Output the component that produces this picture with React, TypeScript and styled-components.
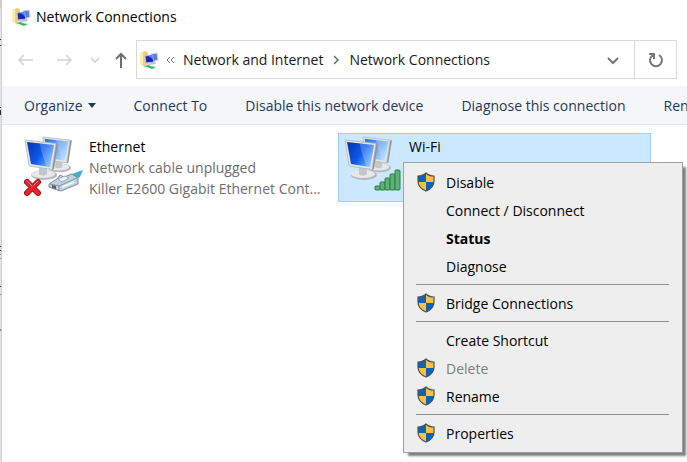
import React, { useId } from "react";
import styled, { createGlobalStyle } from "styled-components";

const Global = createGlobalStyle`
  * { box-sizing: border-box; }
  body { margin: 0; background: #fff; overflow: hidden; }
  body, button { font: 14px/21px "Open Sans", "Noto Sans", sans-serif; color: #191919; }
  button { border: 0; padding: 0; margin: 0; background: none; white-space: nowrap; }
  svg { display: block; flex: none; }
`;

const Screen = styled.div`
  display: flex;
  min-height: 100vh;
  overflow: hidden;
`;

const Backdrop = styled.div`
  width: 2px;
  flex: none;
  overflow: hidden;
  background: #e4e4e4;
  border-right: 1px solid #cfcfcf;
`;

const Window = styled.main`
  flex: 1;
  min-width: 0;
  display: flex;
  flex-direction: column;
`;

const TitleBar = styled.header`
  display: flex;
  align-items: center;
  gap: 5px;
  height: 33px;
  padding-left: 9px;
`;

const Title = styled.h1`
  margin: 0;
  font-size: 14px;
  font-weight: 400;
  color: #000;
`;

const NavRow = styled.nav`
  display: flex;
  align-items: center;
  height: 53px;
  padding: 0 10px 0 13px;
`;

const Arrows = styled.div`
  display: flex;
  align-items: center;
  width: 121px;
  gap: 16px;
`;

const IconButton = styled.button`
  display: flex;
  align-items: center;
  justify-content: center;
`;

const AddressBox = styled.div`
  flex: 1;
  min-width: 0;
  display: flex;
  align-items: stretch;
  height: 39px;
  border: 1px solid #d9d9d9;
`;

const Crumbs = styled.div`
  flex: 1;
  display: flex;
  align-items: center;
  gap: 6px;
  padding-left: 2px;
`;

const AddressButton = styled(IconButton)<{ $divided?: boolean }>`
  width: 42px;
  border-left: ${(p) => (p.$divided ? "1px solid #d9d9d9" : "0")};
`;

const Toolbar = styled.div`
  display: flex;
  align-items: center;
  gap: 38px;
  height: 39px;
  padding-left: 22px;
  overflow: hidden;
  background: #f5f6f8;
  border-bottom: 1px solid #e6e8ec;
`;

const Command = styled.button`
  display: flex;
  align-items: center;
  gap: 5px;
  flex: none;
  color: #1e395b;
`;

const Content = styled.section`
  flex: 1;
  display: flex;
  align-items: flex-start;
  padding: 8px 16px;
`;

const Tile = styled.article<{ $selected?: boolean }>`
  position: relative;
  display: flex;
  flex: 0 0 313px;
  margin-left: ${(p) => (p.$selected ? "7px" : "0")};
  height: 69px;
  padding: 2px 0 0 5px;
  gap: 5px;
  border: 1px solid ${(p) => (p.$selected ? "#99d1ff" : "transparent")};
  background: ${(p) => (p.$selected ? "#cce8ff" : "transparent")};
`;

const Details = styled.div`
  min-width: 0;
`;

const Name = styled.h2`
  margin: 0;
  font-size: 14px;
  font-weight: 400;
  color: #000;
`;

const Detail = styled.p`
  margin: 0;
  color: #6d6d6d;
  white-space: nowrap;
`;

const Menu = styled.div`
  position: absolute;
  left: 64px;
  top: 28px;
  width: 280px;
  padding: 5px 13px 5px 12px;
  background: #eee;
  border: 1px solid #a0a0a0;
  box-shadow: 4px 4px 2px -1px rgba(0, 0, 0, 0.5);
`;

const MenuItem = styled.button<{ $bold?: boolean }>`
  display: grid;
  grid-template-columns: 20px 1fr;
  column-gap: 10px;
  align-items: center;
  width: 100%;
  height: 28px;
  text-align: left;
  font-weight: ${(p) => (p.$bold ? 700 : 400)};
  color: #000;
  &:disabled { color: #7d7d7d; }
`;

const Separator = styled.hr`
  height: 1px;
  margin: 4px 0;
  border: 0;
  background: #919191;
`;

function FolderNetworkIcon() {
  return (
    <svg width="20" height="20" viewBox="0 0 20 20" aria-hidden="true">
      <path d="M1 3l5-2 3 1v12l-4 2-4-2z" fill="#ecd27c" />
      <path d="M1 3l3-1v13l-3-2z" fill="#fbeeb4" />
      <path d="M12 4l6-1 1 7-6 2z" fill="#5f7fdc" stroke="#c8d4e8" />
      <path d="M6 6l7-1 2 7-8 1z" fill="#1726b8" stroke="#a8bce4" />
      <path d="M9 6l4-1 1 4z" fill="#5b7ff0" />
      <path d="M8 14l8-2 1 2-7 1z" fill="#b9c2cc" />
      <path d="M4 16l6-1 1 1 6 1-4 2-5-2z" fill="#35b865" />
    </svg>
  );
}

function Monitor({ x, y, fill, small }: { x: number; y: number; fill: string; small?: boolean }) {
  return (
    <g transform={`translate(${x} ${y}) scale(${small ? 0.88 : 1})`}>
      <ellipse cx="20" cy="35" rx="13" ry="5" fill="#b4b8bb" />
      <ellipse cx="19" cy="34" rx="12" ry="4" fill="#e6e8ea" />
      <path d="M15 27l8 1v6c-2 2-6 2-8 0z" fill="#c3c7ca" />
      <path d="M31 3l3 1-4 25-2 1z" fill="#8f959b" />
      <path d="M1 0l31 3.500-4 26L5 26z" fill="#e3e6e8" stroke="#b0b5b9" strokeWidth=".8" />
      <path d="M3 2l27 3-4 22L7 24z" fill={fill} />
      <path d="M16 3.500l14 1.500-4 22-4-1c-2-8-5-14-6-22.500z" fill="#fff" opacity=".22" />
    </g>
  );
}

function ConnectionIcon({ state }: { state: "unplugged" | "wireless" }) {
  const id = useId();
  return (
    <svg width="60" height="62" viewBox="0 0 60 62" aria-hidden="true">
      <defs>
        <linearGradient id={id} x1="0" y1=".2" x2="1" y2=".8">
          <stop offset="0" stopColor="#0836b8" />
          <stop offset=".5" stopColor="#0e5be6" />
          <stop offset="1" stopColor="#7cc0ff" />
        </linearGradient>
        <linearGradient id={`${id}b`} x1="0" y1="0" x2="1" y2="1">
          <stop offset="0" stopColor="#1d6fe6" />
          <stop offset="1" stopColor="#bfe6ff" />
        </linearGradient>
      </defs>
      <Monitor x={18} y={1} small fill={`url(#${id}b)`} />
      <Monitor x={0} y={4} fill={`url(#${id})`} />
      {state === "unplugged" ? (
        <g>
          <path d="M3 46l11 11M14 46L3 57" stroke="#a80f16" strokeWidth="6" strokeLinecap="round" />
          <path d="M3 46l11 11M14 46L3 57" stroke="#e8252c" strokeWidth="4" strokeLinecap="round" />
          <path d="M3 45l5 5M14 45l-4 4" stroke="#ff8a88" strokeLinecap="round" />
          <path d="M48 38l11-4-3 7-6 3z" fill="#3fb0d4" />
          <path d="M25 48l8-5 3-4 4 2 8-3 6 4v6l-17 7-4-1-8-3z" fill="#c4d0df" stroke="#7c8da2" />
          <path d="M26 48l9 2 18-8M35 50v5" fill="none" stroke="#8393a8" />
          <path d="M34 43l7-3 4 2-7 4z" fill="#eef3f7" stroke="#8393a8" strokeWidth=".7" />
          <path d="M28 49l4 1v3l-4-1z" fill="#59665f" />
          <path d="M38 51l12-5" stroke="#eef4fa" strokeWidth="2" />
        </g>
      ) : (
        <g fill="#5fb277" stroke="#2c7a43">
          <rect x="31" y="50" width="5" height="4" rx="1" />
          <rect x="36" y="46" width="5" height="8" rx="1" />
          <rect x="41" y="42" width="5" height="12" rx="1" />
          <rect x="46" y="38" width="5" height="16" rx="1" />
          <rect x="51" y="34" width="5" height="20" rx="1" />
        </g>
      )}
    </svg>
  );
}

function Shield() {
  const id = useId();
  const outline = "M10 1C8 3 5 4 2 4v5c0 5 3 8 8 10 5-2 8-5 8-10V4c-3 0-6-1-8-3z";
  return (
    <svg width="20" height="20" viewBox="0 0 20 20" aria-hidden="true">
      <clipPath id={id}><path d={outline} /></clipPath>
      <g clipPath={`url(#${id})`}>
        <path d="M0 0h20v20H0z" fill="#ffc03c" />
        <path d="M0 0h10v10H0zM10 10h10v10H10z" fill="#0c62bd" />
      </g>
      <path d={outline} fill="none" stroke="#47525c" strokeWidth="1.2" />
    </svg>
  );
}

function Stroke({ d, w, h, color = "#6e6e6e", weight = 1.5 }: { d: string; w: number; h: number; color?: string; weight?: number }) {
  return (
    <svg width={w} height={h} viewBox={`0 0 ${w} ${h}`} fill="none" stroke={color} strokeWidth={weight} aria-hidden="true">
      <path d={d} />
    </svg>
  );
}

type Entry = { label: string; shield?: boolean; bold?: boolean; disabled?: boolean };

const groups: Entry[][] = [
  [{ label: "Disable", shield: true }, { label: "Connect / Disconnect" }, { label: "Status", bold: true }, { label: "Diagnose" }],
  [{ label: "Bridge Connections", shield: true }],
  [{ label: "Create Shortcut" }, { label: "Delete", shield: true, disabled: true }, { label: "Rename", shield: true }],
  [{ label: "Properties", shield: true }],
];

const commands = ["Connect To", "Disable this network device", "Diagnose this connection", "Rename this connection"];

export default function App() {
  return (
    <Screen>
      <Global />
      <Backdrop>
        <svg width="2" height="340" viewBox="0 0 2 340" aria-hidden="true">
          <path d="M0 0h2v8H0z" fill="#d8ccc6" />
          <path d="M0 39h2v1H0zM0 45h2v1H0zM0 107h2v1H0zM0 110h2v5H0zM0 246h2v1H0zM0 250h2v1H0zM0 286h2v1H0z" fill="#333" />
          <path d="M0 254h2v1H0zM0 258h2v1H0zM0 294h2v1H0zM0 329h2v2H0z" fill="#888" />
        </svg>
      </Backdrop>
      <Window>
        <TitleBar>
          <FolderNetworkIcon />
          <Title>Network Connections</Title>
        </TitleBar>
        <NavRow aria-label="Location">
          <Arrows>
            <IconButton aria-label="Back" disabled><Stroke w={22} h={16} color="#d2d2d2" d="M18 8H4M9 3L4 8l5 5" /></IconButton>
            <IconButton aria-label="Forward" disabled><Stroke w={22} h={16} color="#d2d2d2" d="M4 8h14M13 3l5 5-5 5" /></IconButton>
            <IconButton aria-label="Recent locations" disabled><Stroke w={8} h={8} color="#d2d2d2" d="M0 2l4 4 4-4" /></IconButton>
            <IconButton aria-label="Up"><Stroke w={12} h={18} weight={2} d="M6 17V3M1 8l5-5 5 5" /></IconButton>
          </Arrows>
          <AddressBox>
            <Crumbs>
              <FolderNetworkIcon />
              <Stroke w={12} h={8} weight={1} d="M5 1L2 4l3 3M9 1L6 4l3 3" />
              <button>Network and Internet</button>
              <Stroke w={14} h={10} d="M5 1l4 4-4 4" />
              <button>Network Connections</button>
            </Crumbs>
            <AddressButton aria-label="Previous locations"><Stroke w={14} h={10} weight={2} color="#777" d="M2 3l5 5 5-5" /></AddressButton>
            <AddressButton aria-label="Refresh" $divided><Stroke w={16} h={16} weight={2} color="#777" d="M11 3a6 6 0 1 1-6 0M1 2h5v5" /></AddressButton>
          </AddressBox>
        </NavRow>
        <Toolbar role="toolbar">
          <Command aria-haspopup="menu">
            Organize
            <svg width="8" height="5" viewBox="0 0 8 5" aria-hidden="true"><path d="M0 0h8L4 5z" fill="#1e395b" /></svg>
          </Command>
          {commands.map((c) => <Command key={c}>{c}</Command>)}
        </Toolbar>
        <Content>
          <Tile>
            <ConnectionIcon state="unplugged" />
            <Details>
              <Name>Ethernet</Name>
              <Detail>Network cable unplugged</Detail>
              <Detail>Killer E2600 Gigabit Ethernet Cont...</Detail>
            </Details>
          </Tile>
          <Tile $selected>
            <ConnectionIcon state="wireless" />
            <Details><Name>Wi-Fi</Name></Details>
            <Menu role="menu" aria-label="Wi-Fi">
              {groups.map((g, i) => (
                <React.Fragment key={i}>
                  {i > 0 && <Separator />}
                  {g.map((e) => (
                    <MenuItem key={e.label} role="menuitem" $bold={e.bold} disabled={e.disabled}>
                      {e.shield ? <Shield /> : <span />}
                      {e.label}
                    </MenuItem>
                  ))}
                </React.Fragment>
              ))}
            </Menu>
          </Tile>
        </Content>
      </Window>
    </Screen>
  );
}
